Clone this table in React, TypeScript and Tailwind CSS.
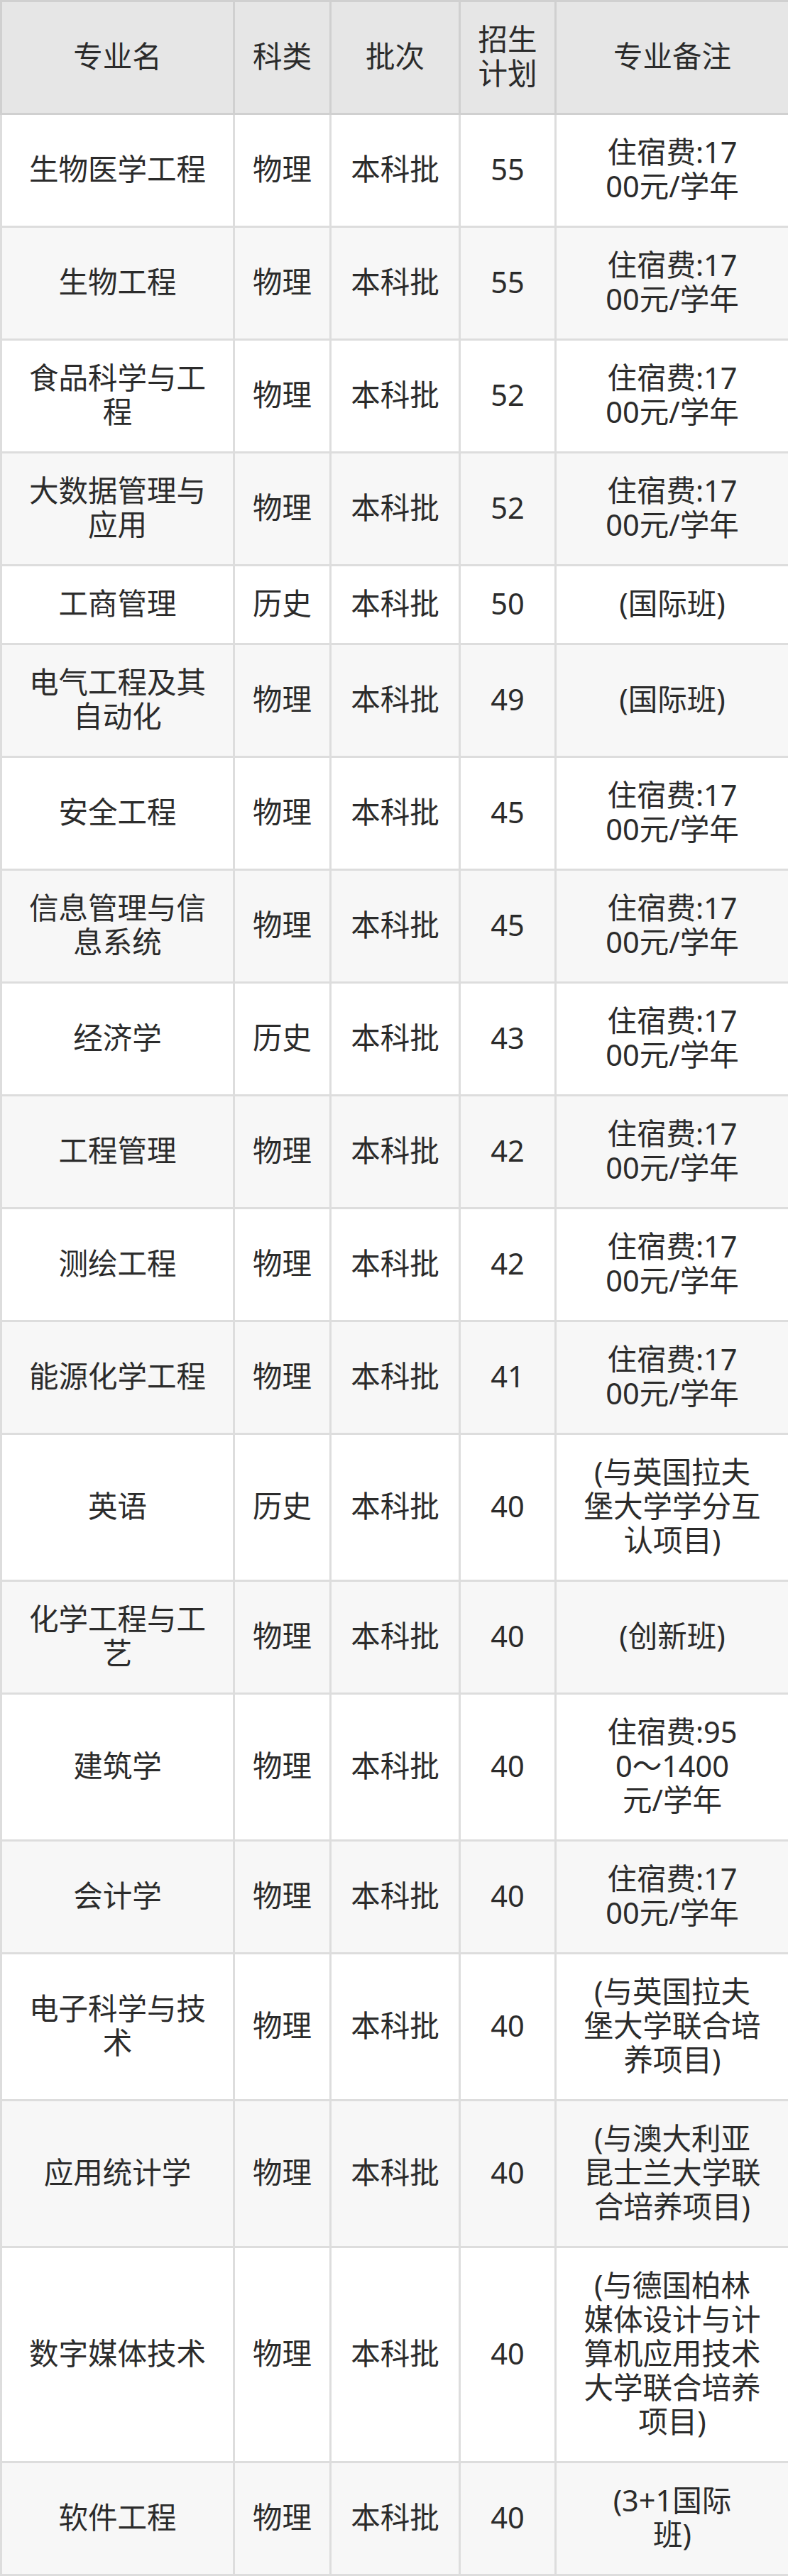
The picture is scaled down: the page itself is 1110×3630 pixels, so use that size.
const rows: [string[], string, string, string[]][] = [
  [["生物医学工程"], "物理", "55", ["住宿费:17", "00元/学年"]],
  [["生物工程"], "物理", "55", ["住宿费:17", "00元/学年"]],
  [["食品科学与工", "程"], "物理", "52", ["住宿费:17", "00元/学年"]],
  [["大数据管理与", "应用"], "物理", "52", ["住宿费:17", "00元/学年"]],
  [["工商管理"], "历史", "50", ["(国际班)"]],
  [["电气工程及其", "自动化"], "物理", "49", ["(国际班)"]],
  [["安全工程"], "物理", "45", ["住宿费:17", "00元/学年"]],
  [["信息管理与信", "息系统"], "物理", "45", ["住宿费:17", "00元/学年"]],
  [["经济学"], "历史", "43", ["住宿费:17", "00元/学年"]],
  [["工程管理"], "物理", "42", ["住宿费:17", "00元/学年"]],
  [["测绘工程"], "物理", "42", ["住宿费:17", "00元/学年"]],
  [["能源化学工程"], "物理", "41", ["住宿费:17", "00元/学年"]],
  [["英语"], "历史", "40", ["(与英国拉夫", "堡大学学分互", "认项目)"]],
  [["化学工程与工", "艺"], "物理", "40", ["(创新班)"]],
  [["建筑学"], "物理", "40", ["住宿费:95", "0～1400", "元/学年"]],
  [["会计学"], "物理", "40", ["住宿费:17", "00元/学年"]],
  [["电子科学与技", "术"], "物理", "40", ["(与英国拉夫", "堡大学联合培", "养项目)"]],
  [["应用统计学"], "物理", "40", ["(与澳大利亚", "昆士兰大学联", "合培养项目)"]],
  [["数字媒体技术"], "物理", "40", ["(与德国柏林", "媒体设计与计", "算机应用技术", "大学联合培养", "项目)"]],
  [["软件工程"], "物理", "40", ["(3+1国际", "班)"]],
];

function Lines({ lines }: { lines: string[] }) {
  return (
    <>
      {lines.map((l, i) => (
        <span key={i} className="block whitespace-nowrap">
          {l}
        </span>
      ))}
    </>
  );
}

const th = "border-[3px] border-[#d0d0d0] px-0 pt-[28px] pb-[32px] font-normal text-center align-middle";
const td = "border-[3px] border-[#dddddd] px-0 pt-[28px] pb-[32px] text-center align-middle";

export default function App() {
  return (
    <div className="w-[1110px] bg-white text-[#2b2b2b] text-[41.5px] leading-[48px] [font-family:'Noto_Sans','Noto_Sans_CJK_SC',sans-serif]">
      <table className="w-full table-fixed border-collapse">
        <colgroup>
          <col className="w-[328px]" />
          <col className="w-[136px]" />
          <col className="w-[182px]" />
          <col className="w-[135px]" />
          <col className="w-[329px]" />
        </colgroup>
        <thead>
          <tr className="bg-[#e6e6e6]">
            <th className={th}>专业名</th>
            <th className={th}>科类</th>
            <th className={th}>批次</th>
            <th className={th}>
              <Lines lines={["招生", "计划"]} />
            </th>
            <th className={th}>专业备注</th>
          </tr>
        </thead>
        <tbody>
          {rows.map(([name, kind, plan, note], i) => (
            <tr key={i} className={i % 2 === 0 ? "bg-white" : "bg-[#f7f7f7]"}>
              <td className={td}>
                <Lines lines={name} />
              </td>
              <td className={td}>{kind}</td>
              <td className={td}>本科批</td>
              <td className={td}>{plan}</td>
              <td className={td}>
                <Lines lines={note} />
              </td>
            </tr>
          ))}
        </tbody>
      </table>
    </div>
  );
}
